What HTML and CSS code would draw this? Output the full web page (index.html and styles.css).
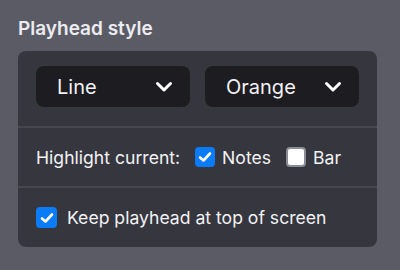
FILE: index.html
```html
<!DOCTYPE html>
<html lang="en">
<head>
    <meta charset="UTF-8">
    <title>Playhead style</title>
    <link rel="stylesheet" href="styles.css">
</head>
<body>
    <h2 class="title">Playhead style</h2>
    <div class="panel">
        <div class="row selects">
            <div class="select">
                <span>Line</span>
                <svg class="chevron" width="18" height="12" viewBox="0 0 18 12"><path d="M2.5 2.5 L9 9 L15.5 2.5" fill="none" stroke="#fff" stroke-width="3" stroke-linecap="round" stroke-linejoin="round"/></svg>
            </div>
            <div class="select">
                <span>Orange</span>
                <svg class="chevron" width="18" height="12" viewBox="0 0 18 12"><path d="M2.5 2.5 L9 9 L15.5 2.5" fill="none" stroke="#fff" stroke-width="3" stroke-linecap="round" stroke-linejoin="round"/></svg>
            </div>
        </div>
        <div class="row highlight">
            <span class="label">Highlight current:</span>
            <label class="check">
                <span class="box checked">
                    <svg width="14" height="12" viewBox="0 0 14 12"><path d="M2 6.5 L5.5 9.5 L12 2.5" fill="none" stroke="#fff" stroke-width="2.6" stroke-linecap="round" stroke-linejoin="round"/></svg>
                </span>
                Notes
            </label>
            <label class="check">
                <span class="box"></span>
                Bar
            </label>
        </div>
        <div class="row keep">
            <label class="check">
                <span class="box checked">
                    <svg width="14" height="12" viewBox="0 0 14 12"><path d="M2 6.5 L5.5 9.5 L12 2.5" fill="none" stroke="#fff" stroke-width="2.6" stroke-linecap="round" stroke-linejoin="round"/></svg>
                </span>
                Keep playhead at top of screen
            </label>
        </div>
    </div>
</body>
</html>
```

FILE: styles.css
```css
body {
    margin: 0;
    padding: 17px 18px;
    background-color: #5b5b66;
    font-family: Inter, "Open Sans", sans-serif;
    color: #f2f2f4;
}
.title {
    margin: 0 0 10px;
    font-size: 19px;
    line-height: 24px;
    font-weight: 600;
    color: #ececf0;
}
.panel {
    width: 359px;
    background-color: #36363f;
    border-radius: 8px;
}
.row {
    display: flex;
    align-items: center;
    padding: 0 18px;
}
.row + .row {
    border-top: 2px solid #474751;
}
.selects {
    gap: 15px;
    padding-top: 15px;
    padding-bottom: 19px;
}
.select {
    flex: 1;
    height: 41px;
    display: flex;
    align-items: center;
    justify-content: space-between;
    padding: 0 17px 0 21px;
    background-color: #1c1c21;
    border-radius: 8px;
    font-size: 20px;
}
.highlight {
    height: 58px;
    font-size: 17.6px;
}
.highlight .label {
    margin-right: 15px;
}
.highlight .check + .check {
    margin-left: 15px;
}
.keep {
    height: 59px;
    font-size: 17.6px;
}
.check {
    display: flex;
    align-items: center;
    gap: 7px;
}
.box {
    width: 16px;
    height: 16px;
    display: flex;
    align-items: center;
    justify-content: center;
    border: 2px solid #8c8c96;
    border-radius: 4px;
    background-color: #fff;
}
.box.checked {
    border-color: #0b7cf5;
    background-color: #0b7cf5;
}
.keep .check {
    gap: 10px;
}
.keep .box {
    width: 17px;
    height: 17px;
}
```
